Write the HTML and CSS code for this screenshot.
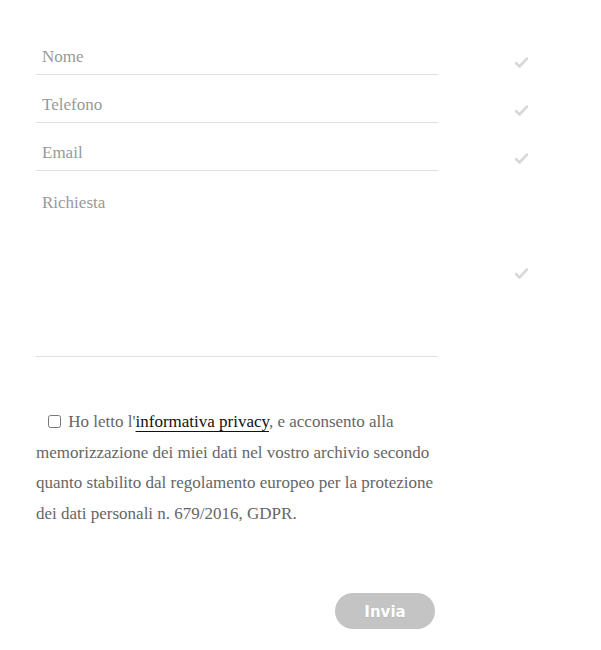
FILE: index.html
```html
<!DOCTYPE html>
<html>
  <head>
    <meta charset="utf-8" />
    <title>Contatti</title>
    <link rel="stylesheet" href="styles.css">
  </head>
<body>

  <form class="contact" method="post" action="#">

    <div class="row">
      <input class="field" type="text" placeholder="Nome" />
      <svg class="check" width="13" height="11" viewBox="0 0 13 11"><path d="M1 6 L4.5 9.5 L12 1.5" /></svg>
    </div>

    <div class="row">
      <input class="field" type="tel" placeholder="Telefono" />
      <svg class="check" width="13" height="11" viewBox="0 0 13 11"><path d="M1 6 L4.5 9.5 L12 1.5" /></svg>
    </div>

    <div class="row">
      <input class="field" type="email" placeholder="Email" />
      <svg class="check" width="13" height="11" viewBox="0 0 13 11"><path d="M1 6 L4.5 9.5 L12 1.5" /></svg>
    </div>

    <div class="row">
      <textarea class="field area" placeholder="Richiesta"></textarea>
      <svg class="check check-area" width="13" height="11" viewBox="0 0 13 11"><path d="M1 6 L4.5 9.5 L12 1.5" /></svg>
    </div>

    <p class="privacy">
      <input type="checkbox" class="consent" id="consent" />
      Ho letto l'<a href="#">informativa privacy</a>, e acconsento alla
      memorizzazione dei miei dati nel vostro archivio secondo quanto stabilito dal
      regolamento europeo per la protezione dei dati personali n. 679/2016, GDPR.
    </p>

    <div class="actions">
      <button type="submit" class="send">Invia</button>
    </div>

  </form>

</body>
</html>
```

FILE: styles.css
```css
body
{
  margin: 0;
  padding: 27px 0 0 36px;
  background-color: #fff;
  font-family: "Liberation Serif", "Times New Roman", serif;
  font-size: 17px;
  color: #666;
}

.contact
{
  width: 402px;
}

.row
{
  display: flex;
  align-items: center;
  width: 560px;
}

.field
{
  box-sizing: border-box;
  width: 402px;
  height: 48px;
  margin: 0;
  padding: 20px 6px 7px 6px;
  border: none;
  border-bottom: 1px solid #e0e0e0;
  background: transparent;
  font-family: inherit;
  font-size: 17px;
  line-height: 20px;
  color: #666;
  outline: none;
}

.field::placeholder
{
  color: #999;
}

.area
{
  height: 186px;
  padding-top: 22px;
  resize: none;
  display: block;
}

.check
{
  margin: 22px 0 0 77px;
  fill: none;
  stroke: #d8d8d8;
  stroke-width: 2.6;
  stroke-linecap: round;
  stroke-linejoin: round;
}

.check-area
{
  margin-top: 18px;
}

.privacy
{
  margin: 50px 0 0 0;
  line-height: 30.6px;
  color: #666;
}

.consent
{
  width: 13px;
  height: 13px;
  margin: 0 3px 0 12px;
  vertical-align: -1px;
}

.privacy a
{
  color: #111;
  text-decoration: underline;
  text-underline-offset: 4px;
}

.actions
{
  display: flex;
  justify-content: flex-end;
  padding-right: 3px;
  margin-top: 64px;
}

.send
{
  width: 100px;
  height: 36px;
  padding-top: 2px;
  border: none;
  border-radius: 18px;
  background-color: #c4c4c4;
  color: #fff;
  font-family: "DejaVu Sans", sans-serif;
  font-weight: bold;
  font-size: 15px;
  text-shadow: 0 1px 1px rgba(0, 0, 0, 0.08);
  cursor: pointer;
}
```
